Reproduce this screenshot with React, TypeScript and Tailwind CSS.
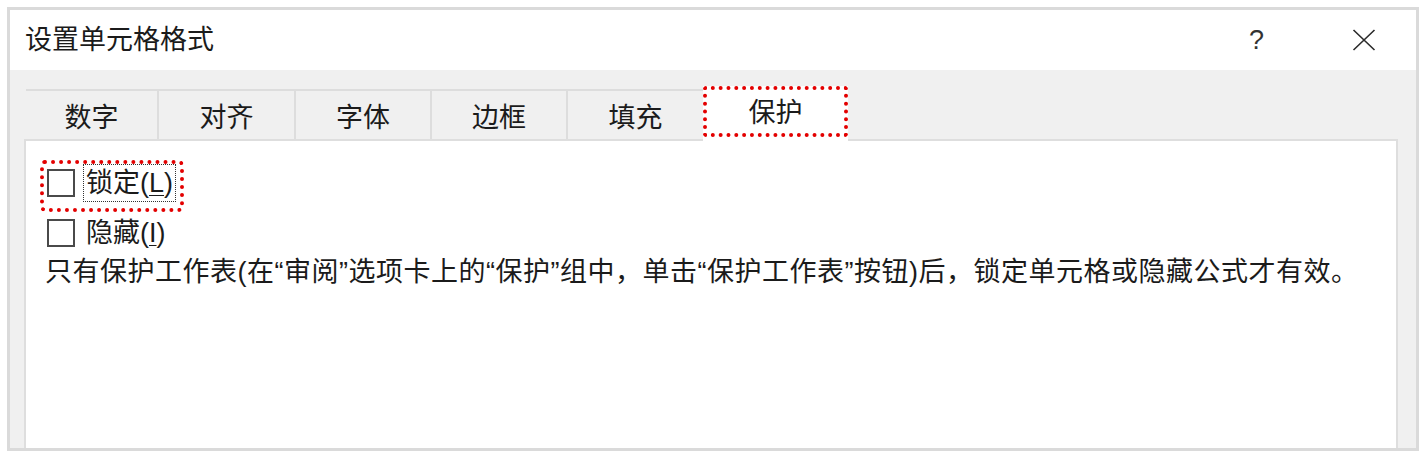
import { FC } from 'react';

const tabs = [
    { label: '数字', width: 'w-[133px]' },
    { label: '对齐', width: 'w-[137px]' },
    { label: '字体', width: 'w-[136px]' },
    { label: '边框', width: 'w-[136px]' },
    { label: '填充', width: 'w-[137px]' }
];

const CheckBox: FC<{}> = () => <div className="w-[28px] h-[28px] border-2 border-[#4a4a4a] bg-white shrink-0" />;

const CloseIcon: FC<{}> = () =>
    <svg width="24" height="22" viewBox="0 0 24 22" className="block">
        <path d="M1.5 1 L22.5 21 M22.5 1 L1.5 21" stroke="#2b2b2b" strokeWidth="1.6" fill="none" />
    </svg>;

const App: FC<{}> = () =>
{
    return (
        <div className="w-[1426px] h-[459px] bg-white pt-[7px] pl-[7px] font-['Liberation_Sans','Noto_Sans_CJK_SC',sans-serif] text-[#1b1b1b]">
            <div className="w-[1412px] h-[444px] border-[3px] border-[#dadada] flex flex-col">
                { /* Title bar */ }
                <div className="h-[60px] bg-white flex items-center pl-[15px] pr-[40px] shrink-0">
                    <span className="text-[27px] leading-[30px]">设置单元格格式</span>
                    <span className="ml-auto text-[27px] leading-[30px] text-[#333]">?</span>
                    <div className="ml-[88px]"><CloseIcon /></div>
                </div>

                { /* Body */ }
                <div className="flex-1 bg-[#f0f0f0] pt-[16px] pl-[14px] pr-[18px] flex flex-col">
                    <div className="flex items-end h-[53px] pl-[2px] shrink-0">
                        { tabs.map(tab =>
                            <div key={ tab.label } className={ `${ tab.width } h-[50px] pt-[6px] border-t-2 border-r-2 border-[#dddddd] flex items-center justify-center text-[27px] leading-[30px]` }>
                                { tab.label }
                            </div>) }
                        <div className="relative z-10 -ml-[2px] -mb-[3px] w-[145px] h-[56px] bg-white">
                            <div className="h-[51px] pt-[2px] border-4 border-dotted border-[#e30000] rounded-[4px] flex items-center justify-center text-[27px] leading-[30px]">
                                保护
                            </div>
                        </div>
                    </div>

                    { /* Content panel */ }
                    <div className="flex-1 bg-white border-2 border-b-0 border-[#dedede] pt-[19px] pl-[14px]">
                        <div className="inline-flex items-start border-4 border-dotted border-[#e30000] rounded-[5px] pl-[3px] pr-[4px] pt-0 pb-[6px]">
                            <div className="flex items-center h-[38px] gap-[8px]">
                                <CheckBox />
                                <span className="h-[38px] px-[2px] border border-dotted border-[#333] flex items-center text-[27px] leading-[30px]">
                                    锁定(<span className="underline underline-offset-[3px] decoration-1">L</span>)
                                </span>
                            </div>
                        </div>
                        <div className="flex items-center h-[38px] gap-[8px] ml-[7px] mt-[2px]">
                            <CheckBox />
                            <span className="h-[38px] px-[2px] border border-transparent flex items-center text-[27px] leading-[30px]">
                                隐藏(<span className="underline underline-offset-[3px] decoration-1">I</span>)
                            </span>
                        </div>
                        <p className="ml-[5px] mt-[5px] text-[27px] leading-[30px] tracking-[0.5px] whitespace-nowrap">
                            只有保护工作表(在“审阅”选项卡上的“保护”组中，单击“保护工作表”按钮)后，锁定单元格或隐藏公式才有效。
                        </p>
                    </div>
                </div>
            </div>
        </div>
    );
};

export default App;
